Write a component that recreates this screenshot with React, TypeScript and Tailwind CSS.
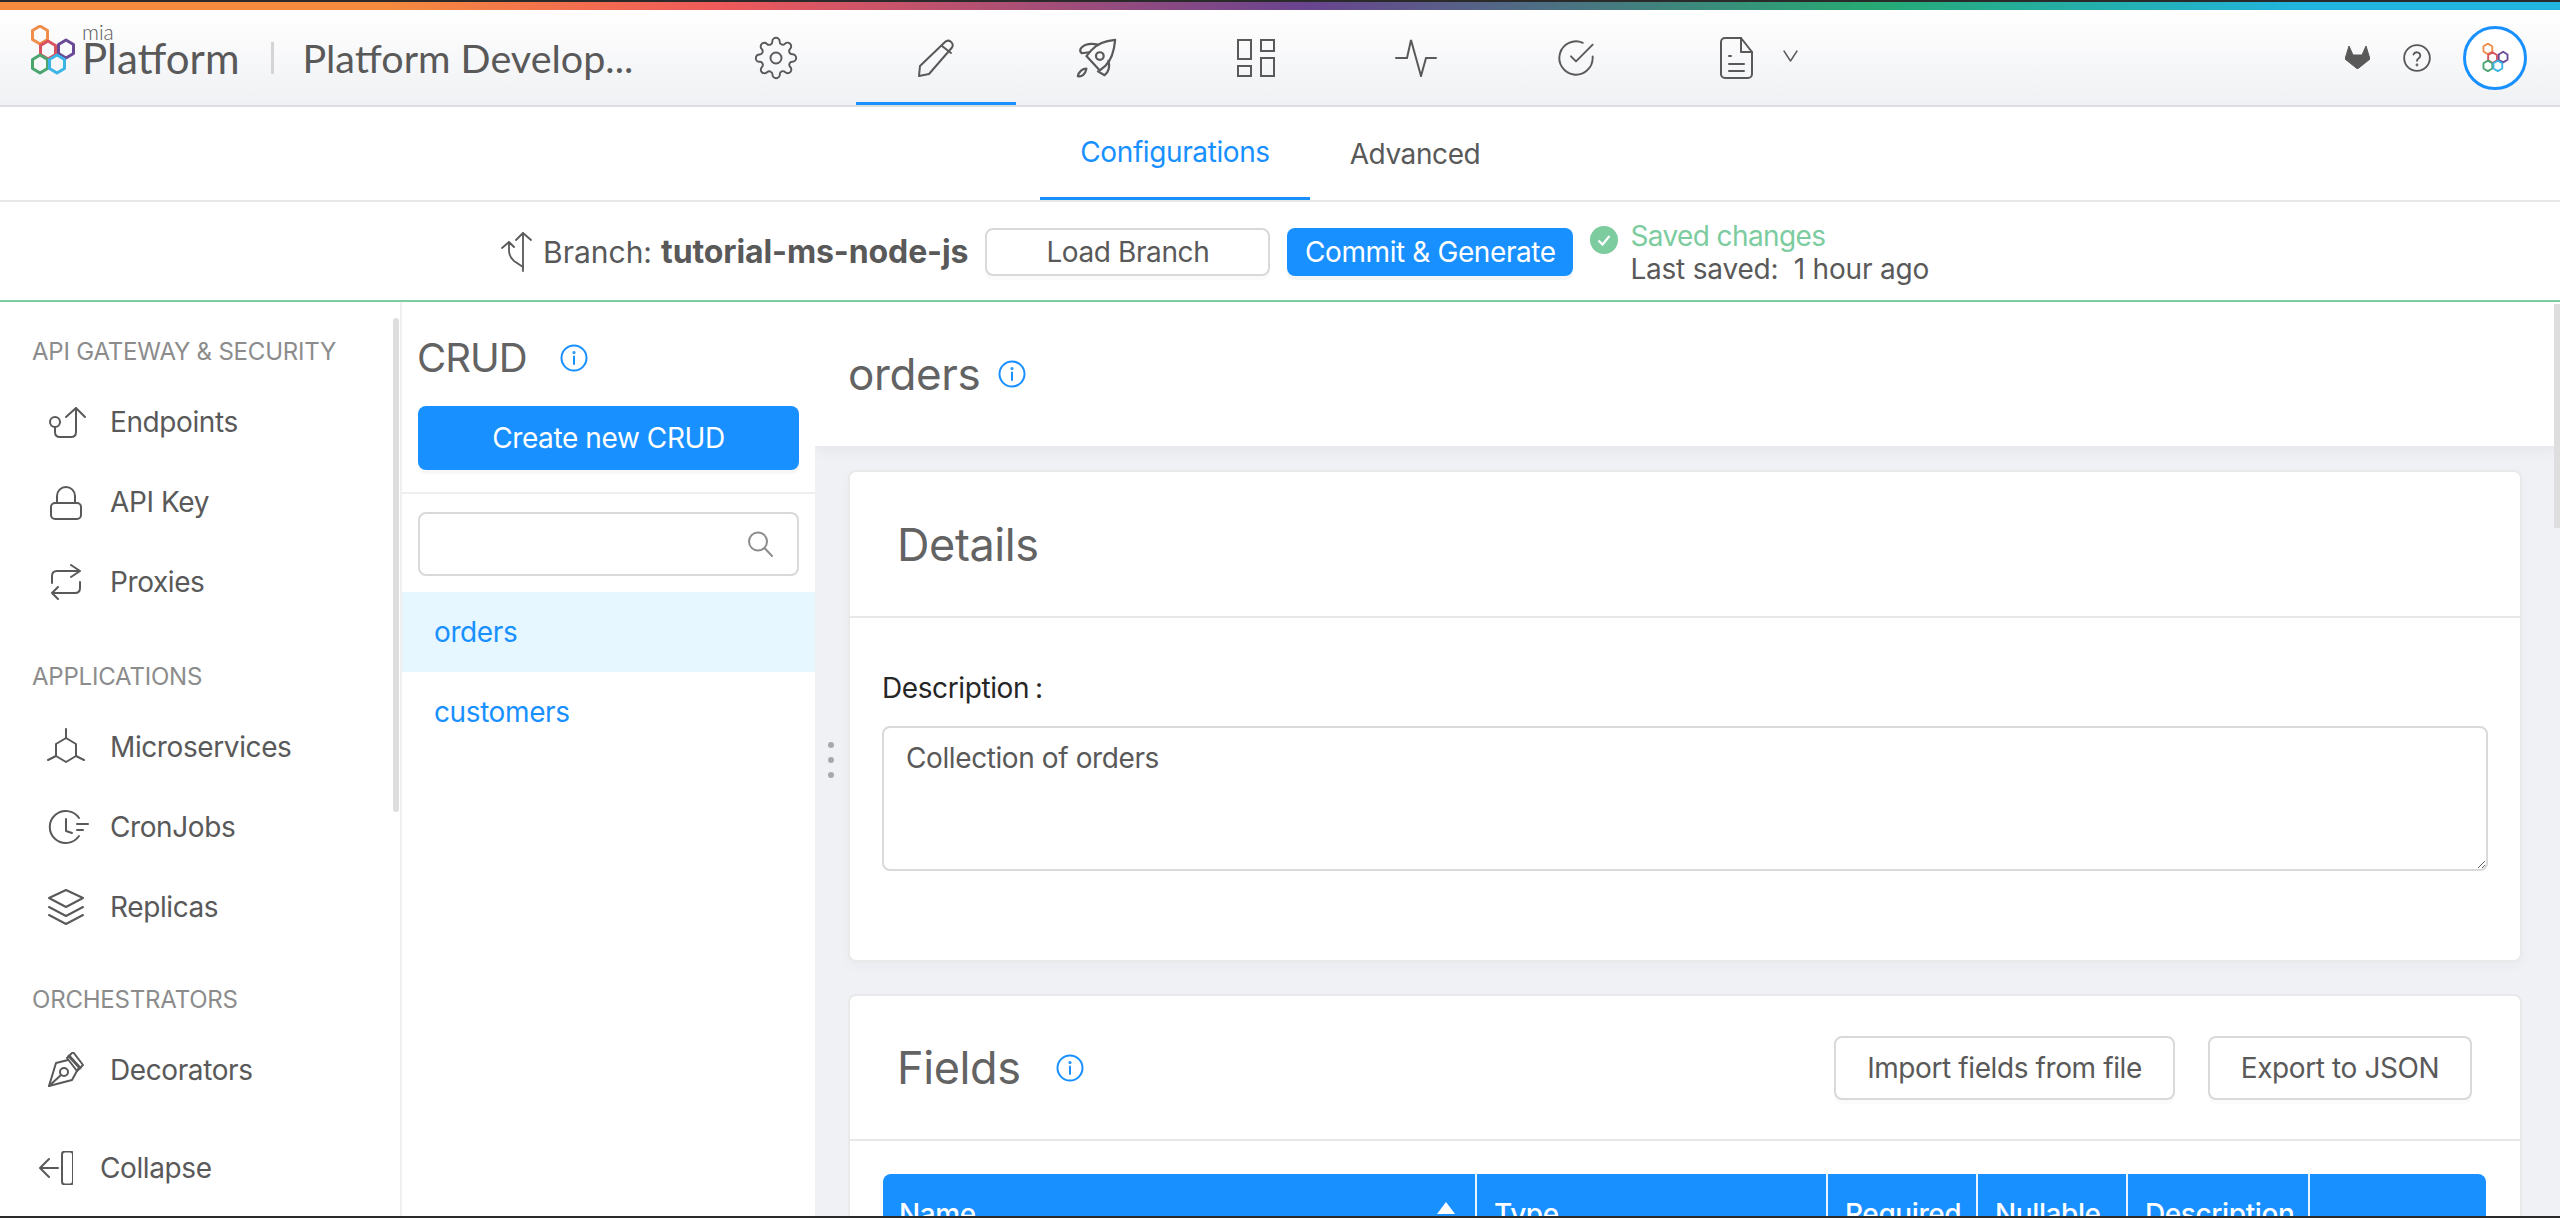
import React from "react";

const G = { fill: "none", stroke: "#595959", strokeWidth: 2, strokeLinecap: "round" as const, strokeLinejoin: "round" as const };

function Hexes({ size = 46, sw = 3 }: { size?: number; sw?: number }) {
  const hex = (cx: number, cy: number, c: string) => {
    const r = 9;
    const w = 7.5;
    return <polygon key={c} points={`${cx},${cy - r} ${cx + w},${cy - r / 2} ${cx + w},${cy + r / 2} ${cx},${cy + r} ${cx - w},${cy + r / 2} ${cx - w},${cy - r / 2}`} fill="none" stroke={c} strokeWidth={sw} strokeLinejoin="round" />;
  };
  return (
    <svg width={size} height={size * (50 / 46)} viewBox="0 0 46 50" className="shrink-0">
      {hex(10, 10, "#ef8d4b")}
      {hex(18, 25, "#d9535f")}
      {hex(36, 24, "#6a4a97")}
      {hex(10, 39, "#4aa56e")}
      {hex(27, 39, "#3cb4e6")}
    </svg>
  );
}

const InfoIcon = () => (
  <svg width="28" height="28" viewBox="0 0 28 28" fill="none" stroke="#1890ff" strokeWidth="2" strokeLinecap="round">
    <circle cx="14" cy="14" r="12.5" />
    <line x1="14" y1="12.5" x2="14" y2="20" />
    <circle cx="14" cy="8.5" r="0.6" fill="#1890ff" />
  </svg>
);

const navIcons: React.ReactNode[] = [
  <svg key="g" width="44" height="44" viewBox="0 0 24 24" {...G} strokeWidth={1.05}>
    <circle cx="12" cy="12" r="3" />
    <path d="M19.4 15a1.65 1.65 0 0 0 .33 1.82l.06.06a2 2 0 0 1 0 2.83 2 2 0 0 1-2.83 0l-.06-.06a1.65 1.65 0 0 0-1.82-.33 1.65 1.65 0 0 0-1 1.51V21a2 2 0 0 1-2 2 2 2 0 0 1-2-2v-.09A1.65 1.65 0 0 0 9 19.4a1.65 1.65 0 0 0-1.82.33l-.06.06a2 2 0 0 1-2.83 0 2 2 0 0 1 0-2.83l.06-.06a1.65 1.65 0 0 0 .33-1.82 1.65 1.65 0 0 0-1.51-1H3a2 2 0 0 1-2-2 2 2 0 0 1 2-2h.09A1.65 1.65 0 0 0 4.6 9a1.65 1.65 0 0 0-.33-1.82l-.06-.06a2 2 0 0 1 0-2.83 2 2 0 0 1 2.83 0l.06.06a1.65 1.65 0 0 0 1.82.33H9a1.65 1.65 0 0 0 1-1.51V3a2 2 0 0 1 2-2 2 2 0 0 1 2 2v.09a1.65 1.65 0 0 0 1 1.51 1.65 1.65 0 0 0 1.82-.33l.06-.06a2 2 0 0 1 2.83 0 2 2 0 0 1 0 2.83l-.06.06a1.65 1.65 0 0 0-.33 1.82V9a1.65 1.65 0 0 0 1.51 1H21a2 2 0 0 1 2 2 2 2 0 0 1-2 2h-.09a1.65 1.65 0 0 0-1.51 1z" />
  </svg>,
  <svg key="p" width="38" height="38" viewBox="0 0 38 38" {...G}>
    <path d="M28 3a4.5 4.5 0 0 1 7 5.5L12 35 2 37l1-10z" />
    <path d="M25 7l9 7" />
  </svg>,
  <svg key="r" width="44" height="44" viewBox="13 11 46 44" {...G} strokeWidth={2.3}>
    <path d="M56 14C44 15 36 19 31 25L26 31L40 46L46 41C52 35 55 26 56 14Z" />
    <path d="M29 27L21 28C19 26 19 24 21 22C25 18 33 18 38 19" />
    <path d="M49 36C51 42 49 48 45 51L38 47" />
    <circle cx="40" cy="31" r="4" />
    <path d="M26 44C22 44 18 47 17 52C21 53 25 50 26 44Z" />
  </svg>,
  <svg key="d" width="38" height="38" viewBox="0 0 38 38" {...G} strokeLinejoin="miter">
    <rect x="1" y="1" width="13" height="19" />
    <rect x="24" y="1" width="13" height="11" />
    <rect x="1" y="27" width="13" height="10" />
    <rect x="24" y="19" width="13" height="18" />
  </svg>,
  <svg key="a" width="42" height="38" viewBox="0 0 42 38" {...G} strokeLinejoin="miter">
    <polyline points="1,19 12,19 16,1 26,37 31,19 41,19" />
  </svg>,
  <svg key="c" width="40" height="40" viewBox="0 0 24 24" {...G} strokeWidth={1.15}>
    <path d="M22 11.08V12a10 10 0 1 1-5.93-9.14" />
    <polyline points="22 4 12 14.01 9 11.01" />
  </svg>,
];

function Sidebar() {
  const Item = ({ icon, label }: { icon: React.ReactNode; label: string }) => (
    <div className="h-[80px] flex items-center pl-[48px] gap-[26px] text-[28px] text-[#595959]">
      <span className="w-[36px] h-[36px] flex items-center justify-center shrink-0">{icon}</span>
      <span>{label}</span>
    </div>
  );
  const Title = ({ cls, children }: { cls: string; children: string }) => (
    <div className={`pl-[32px] text-[24px] leading-[28px] tracking-[-0.2px] text-[#8c8c8c] ${cls}`}>{children}</div>
  );
  return (
    <aside className="relative w-[402px] shrink-0 bg-white border-r-2 border-[#f0f0f0] flex flex-col">
      <div className="absolute right-[1px] top-[16px] w-[6px] h-[494px] rounded-[3px] bg-[#dedede]" />
      <Title cls="pt-[36px] pb-[16px]">API GATEWAY &amp; SECURITY</Title>
      <Item label="Endpoints" icon={
        <svg width="36" height="36" viewBox="0 0 36 36" className="overflow-visible" {...G}>
          <circle cx="7" cy="18" r="5" />
          <path d="M7 23V28Q7 33 12 33H23Q28 33 28 28V4M18 13L28 4L37 13" />
        </svg>} />
      <Item label="API Key" icon={
        <svg width="36" height="36" viewBox="0 0 36 36" {...G}>
          <rect x="3" y="19" width="30" height="16" rx="4" />
          <path d="M9 19V12a9 9 0 0 1 18 0V19" />
        </svg>} />
      <Item label="Proxies" icon={
        <svg width="36" height="36" viewBox="0 0 36 36" {...G}>
          <path d="M4 19V12Q4 7 9 7H32M23 1L32 7L23 13" />
          <path d="M32 18V24Q32 29 27 29H4M10 23L4 29L10 35" />
        </svg>} />
      <Title cls="pt-[41px] pb-[16px]">APPLICATIONS</Title>
      <Item label="Microservices" icon={
        <svg width="36" height="36" viewBox="0 0 36 36" className="overflow-visible" {...G}>
          <path d="M18 9L28 15V27L18 33L8 27V15Z" />
          <path d="M18 9V0M8 27L0 31M28 27L36 31" />
        </svg>} />
      <Item label="CronJobs" icon={
        <svg width="36" height="36" viewBox="0 0 36 36" className="overflow-visible" {...G}>
          <path d="M31 9A16 16 0 1 0 31 27" />
          <path d="M18 10V22L24 24M29 15H40M29 21H35" />
        </svg>} />
      <Item label="Replicas" icon={
        <svg width="36" height="36" viewBox="0 0 36 36" {...G}>
          <path d="M18 1L35 9L18 18L1 9Z" />
          <path d="M1 18L18 27L35 18M1 26L18 35L35 26" />
        </svg>} />
      <Title cls="pt-[39px] pb-[16px]">ORCHESTRATORS</Title>
      <Item label="Decorators" icon={
        <svg width="36" height="36" viewBox="0 0 36 36" {...G}>
          <path d="M19 6L25 0L35 13L29 19Z" />
          <path d="M20 8L8 11L1 34L24 28L30 17" />
          <path d="M21 4L32 16" strokeWidth="3" />
          <circle cx="16" cy="20" r="4" />
          <path d="M1 34L13 23" />
        </svg>} />
      <div className="mt-auto h-[96px] flex items-center pl-[39px] gap-[27px] text-[28px] text-[#595959]">
        <svg width="34" height="34" viewBox="0 0 34 34" className="shrink-0" {...G}>
          <path d="M19 17H1M10 8L1 17L10 26" />
          <rect x="23" y="0.5" width="11" height="33" rx="3" />
        </svg>
        <span>Collapse</span>
      </div>
    </aside>
  );
}

function CrudPanel() {
  return (
    <section className="w-[413px] shrink-0 bg-white flex flex-col">
      <div className="px-[16px] pt-[33px] pb-[22px] border-b-2 border-[#eeeeee]">
        <div className="flex items-center h-[46px] gap-[33px] text-[40px] leading-[46px] tracking-[-1px] text-[#636363]">
          <span className="-ml-[1px]">CRUD</span>
          <InfoIcon />
        </div>
        <div className="mt-[25px] h-[64px] rounded-[8px] bg-[#1890ff] text-white text-[28px] flex items-center justify-center shadow-[0_4px_0_rgba(0,0,0,0.03)]">Create new CRUD</div>
      </div>
      <div className="px-[16px] pt-[18px] pb-[16px]">
        <div className="h-[64px] rounded-[8px] border-2 border-[#d9d9d9] flex items-center justify-end pr-[24px]">
          <svg width="26" height="26" viewBox="0 0 26 26" fill="none" stroke="#8c8c8c" strokeWidth="2" strokeLinecap="round">
            <circle cx="11" cy="10.5" r="9" />
            <line x1="17.5" y1="17" x2="25" y2="25" />
          </svg>
        </div>
      </div>
      <div className="h-[80px] bg-[#e6f7ff] text-[#1890ff] text-[28px] flex items-center pl-[32px]">orders</div>
      <div className="h-[80px] text-[#1890ff] text-[28px] flex items-center pl-[32px]">customers</div>
    </section>
  );
}

function Content() {
  const btn = "h-[64px] rounded-[8px] border-2 border-[#d9d9d9] bg-white text-[28px] text-[#595959] flex items-center justify-center shadow-[0_4px_0_rgba(0,0,0,0.015)]";
  const th = "h-full flex items-start pt-[23px] pl-[17px] border-l-2 border-[#e8f4ff]";
  return (
    <main className="relative flex-1 min-w-0 flex flex-col bg-[#eff1f5] overflow-hidden">
      <div className="absolute right-0 top-[2px] w-[6px] h-[224px] bg-[#dedede] z-10" />
      <div className="absolute left-[13px] top-[440px] flex flex-col gap-[9px]">
        <span className="w-[6px] h-[6px] rounded-full bg-[#a8a8a8]" />
        <span className="w-[6px] h-[6px] rounded-full bg-[#a8a8a8]" />
        <span className="w-[6px] h-[6px] rounded-full bg-[#a8a8a8]" />
      </div>
      <div className="h-[144px] shrink-0 bg-white flex items-center pl-[33px] gap-[18px] shadow-[0_4px_14px_rgba(0,0,0,0.05)]">
        <span className="text-[44px] text-[#636363]">orders</span>
        <InfoIcon />
      </div>
      <div className="pl-[33px] pr-[38px] pt-[24px]">
        <div className="h-[492px] bg-white border-2 border-[#e9e9e9] rounded-[8px] shadow-[0_4px_12px_rgba(0,0,0,0.03)]">
          <div className="h-[146px] pt-[2px] flex items-center pl-[47px] border-b-2 border-[#e8e8e8] text-[45px] text-[#636363]">Details</div>
          <div className="px-[32px] pt-[53px]">
            <div className="text-[28px] leading-[34px] text-[#262626]">Description<span className="ml-[6px]">:</span></div>
            <textarea readOnly defaultValue="Collection of orders" className="mt-[21px] block w-full h-[145px] rounded-[8px] border-2 border-[#d9d9d9] px-[22px] pt-[8px] text-[28px] leading-[45px] text-[#595959] outline-none resize-y" />
          </div>
        </div>
        <div className="mt-[32px] bg-white border-2 border-[#e9e9e9] rounded-[8px]">
          <div className="h-[145px] flex items-center pl-[47px] pr-[48px] border-b-2 border-[#e8e8e8]">
            <span className="text-[45px] text-[#636363]">Fields</span>
            <span className="ml-[35px]"><InfoIcon /></span>
            <div className="ml-auto flex gap-[33px]">
              <div className={`${btn} w-[341px]`}>Import fields from file</div>
              <div className={`${btn} w-[264px]`}>Export to JSON</div>
            </div>
          </div>
          <div className="pl-[33px] pr-[34px] pt-[33px]">
            <div className="h-[90px] flex rounded-t-[8px] bg-[#1890ff] text-white text-[28px] leading-[34px] font-medium overflow-hidden">
              <div className="w-[592px] h-full flex items-start justify-between pt-[23px] pl-[16px] pr-[20px]">
                <span>Name</span>
                <svg width="18" height="12" viewBox="0 0 18 12" className="mt-[5px]"><polygon points="9,0 18,12 0,12" fill="#ffffff" /></svg>
              </div>
              <div className={`${th} w-[351px]`}>Type</div>
              <div className={`${th} w-[150px]`}>Required</div>
              <div className={`${th} w-[150px]`}>Nullable</div>
              <div className={`${th} w-[182px]`}>Description</div>
              <div className={`${th} flex-1`} />
            </div>
          </div>
        </div>
      </div>
    </main>
  );
}

export default function App() {
  return (
    <div className="w-full h-[1218px] overflow-hidden flex flex-col bg-white tracking-[-0.4px] font-['Inter',sans-serif]">
      <div className="h-[2px] shrink-0 bg-[#2a2a2a]" />
      <div className="h-[8px] shrink-0 bg-[linear-gradient(90deg,#f58b3f_0%,#f58b3f_15%,#f05a5a_28%,#69448f_51%,#27a973_73%,#22b5e0_90%,#22b5e0_100%)]" />
      <header className="h-[97px] shrink-0 border-b-2 border-[#dcdddf] bg-[linear-gradient(180deg,#ffffff_0%,#f0f1f4_100%)] flex items-center">
        <div className="w-[696px] h-full shrink-0 flex items-center pl-[30px] tracking-normal">
          <span className="-mt-[16px]"><Hexes /></span>
          <div className="ml-[6px] -mt-[15px] flex flex-col font-['Lato',sans-serif] text-[#595959]">
            <span className="text-[21px] leading-[16px] font-light">mia</span>
            <span className="text-[42px] leading-[36px]">Platform</span>
          </div>
          <span className="ml-[32px] w-[3px] h-[32px] bg-[#d4d4d4]" />
          <span className="ml-[28px] text-[39.5px] font-['Lato',sans-serif] text-[#595959] whitespace-nowrap">Platform Develop...</span>
        </div>
        {navIcons.map((ic, i) => (
          <div key={i} className={`w-[160px] h-full pt-[3px] border-b-[3px] flex items-center justify-center ${i === 1 ? "border-[#1890ff]" : "border-transparent"}`}>{ic}</div>
        ))}
        <div className="w-[160px] h-full pt-[3px] border-b-[3px] border-transparent flex items-center pl-[64px] gap-[30px]">
          <svg width="33" height="42" viewBox="0 0 33 42" {...G}>
            <path d="M5 1H21L32 15V37a4 4 0 0 1-4 4H5a4 4 0 0 1-4-4V5a4 4 0 0 1 4-4Z" />
            <path d="M21 1V15H32" />
            <path d="M9 19H11M9 27H24M9 34H24" />
          </svg>
          <svg width="15" height="12" viewBox="0 0 15 12" className="-mt-[4px] shrink-0" {...G} strokeWidth={1.4}><path d="M1 1L7.5 11L14 1" /></svg>
        </div>
        <div className="ml-auto flex items-center pr-[33px]">
          <svg width="25" height="23" viewBox="0 0 25 23"><path d="M0 13L4 0L8 9H17L21 0L25 13L12.5 23Z" fill="#595959" stroke="#595959" strokeLinejoin="round" /></svg>
          <svg width="28" height="28" viewBox="0 0 24 24" fill="none" stroke="#595959" strokeWidth="1.6" strokeLinecap="round" className="ml-[33px]">
            <circle cx="12" cy="12" r="11" />
            <path d="M9 9a3 3 0 0 1 5.8 1c0 2-2.8 2.6-2.8 4.4" />
            <circle cx="12" cy="18" r="0.4" />
          </svg>
          <div className="ml-[32px] w-[64px] h-[64px] rounded-full border-[3px] border-[#1890ff] bg-white flex items-center justify-center">
            <Hexes size={27} sw={3.2} />
          </div>
        </div>
      </header>
      <div className="h-[95px] shrink-0 border-b-2 border-[#e8e8e8] flex justify-center text-[28px]">
        <div className="w-[270px] h-[93px] flex items-center justify-center text-[#1890ff] border-b-[3px] border-[#1890ff]">Configurations</div>
        <div className="w-[210px] h-[93px] flex items-center justify-center text-[#595959]">Advanced</div>
      </div>
      <div className="h-[100px] shrink-0 border-b-2 border-[#7ccc9f] flex items-center pl-[500px] pt-[2px] text-[28px] text-[#595959]">
        <svg width="32" height="40" viewBox="0 0 32 40" className="shrink-0" {...G} strokeWidth={1.8}>
          <path d="M23 1V39M16 8L23 1L31 8" />
          <path d="M2 16L9 10L14 15M9 10V18Q9 25 14 29L23 35" />
        </svg>
        <span className="ml-[11px] text-[30px] tracking-normal">Branch:</span>
        <span className="ml-[9px] text-[32px] tracking-[-0.1px] font-bold whitespace-nowrap">tutorial-ms-node-js</span>
        <div className="ml-[17px] w-[285px] h-[48px] shrink-0 rounded-[8px] border-2 border-[#d9d9d9] flex items-center justify-center shadow-[0_4px_0_rgba(0,0,0,0.02)]">Load Branch</div>
        <div className="ml-[17px] w-[286px] h-[48px] shrink-0 rounded-[8px] bg-[#1890ff] text-white flex items-center justify-center shadow-[0_4px_0_rgba(0,0,0,0.04)]">Commit &amp; Generate</div>
        <div className="ml-[17px] flex items-start gap-[12px]">
          <svg width="28" height="28" viewBox="0 0 28 28" className="mt-[7px] shrink-0">
            <circle cx="14" cy="14" r="14" fill="#7ccc9f" />
            <path d="M8.5 14.5L12.5 18.5L19.5 10" fill="none" stroke="#ffffff" strokeWidth="2.2" />
          </svg>
          <div className="pt-[1px] leading-[33px] whitespace-pre">
            <div className="text-[#7ccc9f] tracking-[-0.6px]">Saved changes</div>
            <div className="tracking-[-0.2px]">Last saved:  1 hour ago</div>
          </div>
        </div>
      </div>
      <div className="flex-1 min-h-0 flex">
        <Sidebar />
        <CrudPanel />
        <Content />
      </div>
      <div className="h-[2px] shrink-0 bg-[#2a2a2a]" />
    </div>
  );
}
